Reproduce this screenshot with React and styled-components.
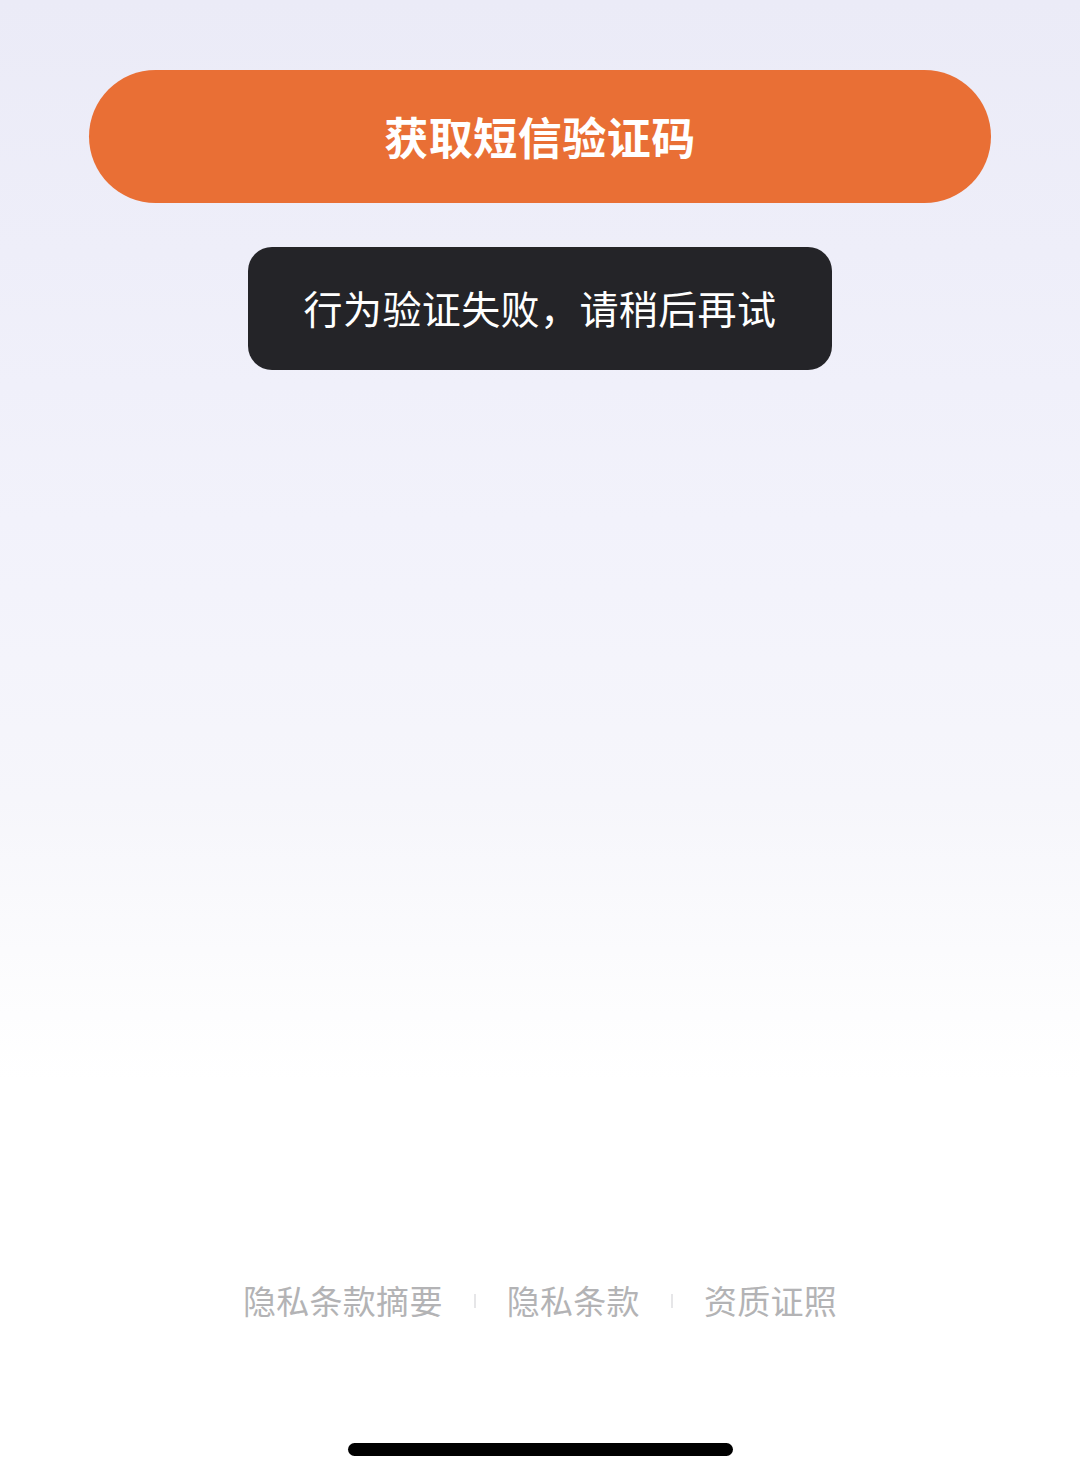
import React from "react";
import styled, { createGlobalStyle } from "styled-components";

const GlobalStyle = createGlobalStyle`
  html, body {
    margin: 0;
    padding: 0;
    background: #ffffff;
  }
  body {
    font-family: "Noto Sans CJK SC", "Noto Sans", sans-serif;
    -webkit-font-smoothing: antialiased;
  }
`;

const Screen = styled.div`
  width: 1080px;
  height: 1478px;
  box-sizing: border-box;
  display: flex;
  flex-direction: column;
  align-items: center;
  padding-top: 70px;
  background: linear-gradient(
    180deg,
    #ebebf7 0px,
    #eeeef9 250px,
    #f2f2fb 520px,
    #f6f6fb 800px,
    #fbfbfd 950px,
    #ffffff 1080px,
    #ffffff 100%
  );
  overflow: hidden;
`;

const PrimaryButton = styled.button`
  width: 902px;
  height: 133px;
  border: none;
  border-radius: 67px;
  background: #e96f35;
  color: #ffffff;
  font-family: "Noto Sans CJK SC", sans-serif;
  font-size: 44px;
  font-weight: 700;
  letter-spacing: 0.5px;
  display: flex;
  align-items: center;
  justify-content: center;
  padding: 0 0 2px;
  cursor: pointer;
`;

const Toast = styled.div`
  margin-top: 44px;
  width: 584px;
  height: 123px;
  box-sizing: border-box;
  padding-bottom: 3px;
  border-radius: 24px;
  background: #242428;
  color: #ffffff;
  font-size: 39px;
  font-weight: 400;
  display: flex;
  align-items: center;
  justify-content: center;
  letter-spacing: 0.4px;
`;

const Footer = styled.nav`
  margin-top: auto;
  display: flex;
  align-items: center;
  gap: 31px;
  margin-bottom: 126px;
`;

const FooterLink = styled.a`
  font-size: 33px;
  color: #b3b3b5;
  text-decoration: none;
  line-height: 1;
  letter-spacing: 0.3px;
`;

const Divider = styled.span`
  width: 2px;
  height: 14px;
  background: #e6e6e8;
`;

const HomeIndicator = styled.div`
  width: 385px;
  height: 13px;
  border-radius: 7px;
  background: #000000;
  margin-bottom: 22px;
`;

export default function App() {
  const links = ["隐私条款摘要", "隐私条款", "资质证照"];
  return (
    <>
      <GlobalStyle />
      <Screen>
        <PrimaryButton>获取短信验证码</PrimaryButton>
        <Toast>行为验证失败，请稍后再试</Toast>
        <Footer>
          {links.map((label, i) => (
            <React.Fragment key={label}>
              {i > 0 && <Divider />}
              <FooterLink href="#">{label}</FooterLink>
            </React.Fragment>
          ))}
        </Footer>
        <HomeIndicator />
      </Screen>
    </>
  );
}
